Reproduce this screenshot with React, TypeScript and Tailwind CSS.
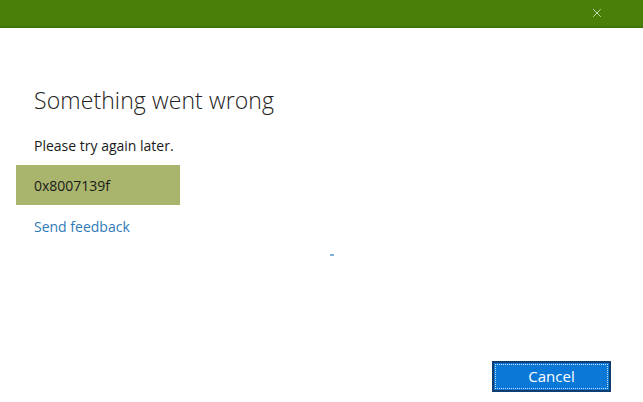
import { X } from "lucide-react";

export default function App() {
  return (
    <div className="flex h-[402px] w-[643px] flex-col bg-white font-['Segoe_UI','Open_Sans','Liberation_Sans',sans-serif] text-[#1a1a1a]">
      {/* title bar */}
      <header className="flex h-[28px] items-center justify-end border-b-2 border-[#3f7406] bg-[#4a8009] pr-[39px]">
        <X className="h-[14px] w-[14px] text-[#d5e8c4]" strokeWidth={1.5} />
      </header>

      {/* content */}
      <main className="flex flex-1 flex-col pt-[57px]">
        <h1 className="pl-[34px] text-[23px] leading-[30px] font-light tracking-[0.1px] text-[#222]">
          Something went wrong
        </h1>
        <p className="mt-[21px] pl-[34px] text-[14px] leading-[20px]">Please try again later.</p>
        <div className="mt-[9px] ml-[16px] flex h-[40px] w-[164px] items-center bg-[#a9b46c] pl-[18px] text-[14px]">
          0x8007139f
        </div>
        <a className="mt-[12px] pl-[34px] text-[14px] leading-[20px] text-[#2f7ab8]">Send feedback</a>
        <div className="mt-[17px] ml-[330px] h-[2px] w-[4px] bg-[#7fb1d6]" />

        <div className="mt-auto flex justify-end pr-[32px] pb-[10px]">
          <button className="h-[31px] w-[119px] border-2 border-[#0f3e73] bg-[#0b78d7] p-[1px]">
            <span className="flex h-full w-full items-center justify-center border border-dotted border-[#cfe3f7] text-[15px] text-white">
              Cancel
            </span>
          </button>
        </div>
      </main>
    </div>
  );
}
